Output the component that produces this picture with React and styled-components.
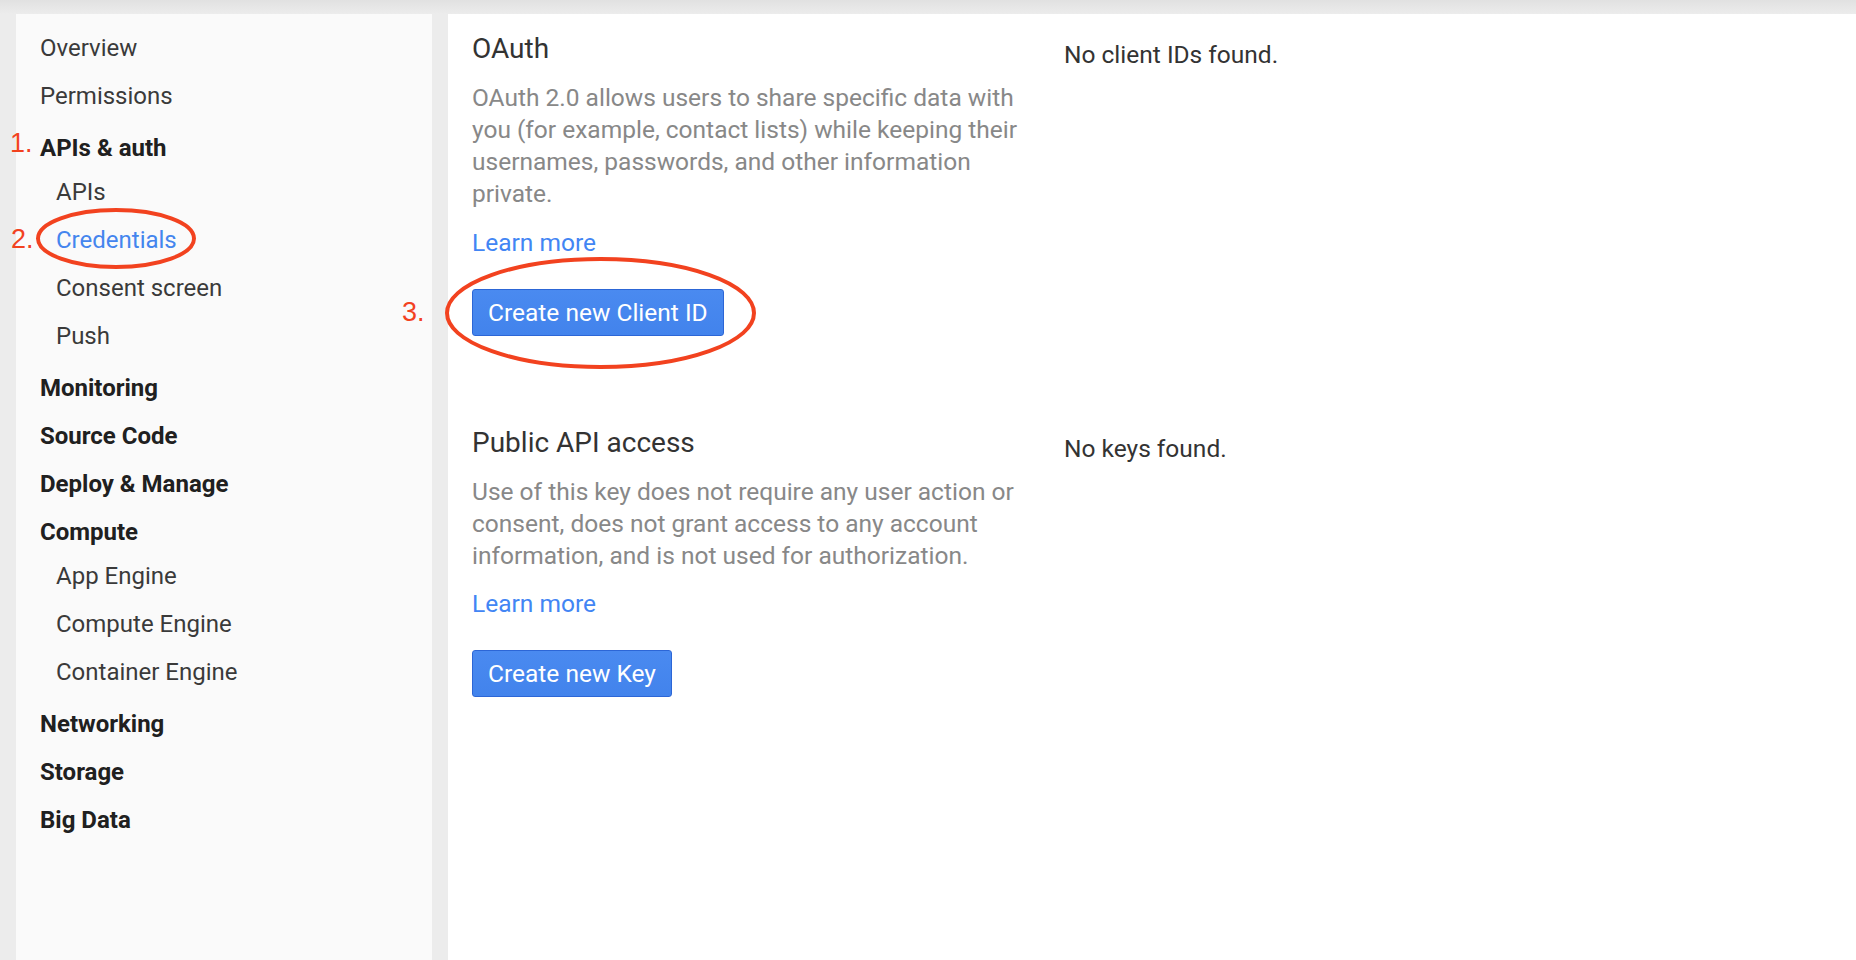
import React from "react";
import styled, { createGlobalStyle } from "styled-components";

const GlobalStyle = createGlobalStyle`
  html, body {
    margin: 0;
    padding: 0;
    background: #ececec;
  }
  body {
    font-family: Roboto, "Noto Sans", "Liberation Sans", sans-serif;
    -webkit-font-smoothing: antialiased;
  }
  * { box-sizing: border-box; }
`;

const Page = styled.div`
  position: relative;
  display: flex;
  gap: 16px;
  min-height: 100vh;
  padding: 14px 0 0 16px;
  background: linear-gradient(#e1e1e1 0px, #ececec 14px, #ececec 100%);
`;

const Sidebar = styled.nav`
  flex: 0 0 416px;
  background: #fafafa;
  padding: 10px 0 0 24px;
`;

const NavItem = styled.a`
  display: block;
  font-size: 24px;
  text-decoration: none;
  white-space: nowrap;
  cursor: pointer;
  height: 48px;
  line-height: ${(p) => (p.$heading ? "40px" : "48px")};
  padding-top: ${(p) => (p.$heading ? "8px" : "0")};
  padding-left: ${(p) => (p.$sub ? "16px" : "0")};
  font-weight: ${(p) => (p.$heading ? 700 : 400)};
  color: ${(p) => (p.$active ? "#4485ee" : p.$heading ? "#202020" : "#3a3a3a")};
`;

const Main = styled.main`
  flex: 1 1 auto;
  background: #ffffff;
  padding: 17px 24px 40px 24px;
`;

const Section = styled.section`
  display: grid;
  grid-template-columns: 560px 1fr;
  column-gap: 32px;
  margin-top: ${(p) => (p.$first ? "0" : "89px")};
`;

const Column = styled.div`
  display: flex;
  flex-direction: column;
  align-items: flex-start;
`;

const Title = styled.h2`
  margin: 0 0 15px 0;
  font-size: 28px;
  line-height: 36px;
  font-weight: 400;
  color: #333333;
`;

const Description = styled.p`
  margin: 0;
  font-size: 24.5px;
  line-height: 32px;
  color: #888888;
`;

const LearnMore = styled.a`
  margin-top: 16.5px;
  font-size: 24.5px;
  line-height: 32px;
  color: #4285f4;
  text-decoration: none;
  cursor: pointer;
`;

const PrimaryButton = styled.button`
  margin-top: 30px;
  height: 47px;
  padding: 0 15px;
  border: 1px solid #2c66d6;
  border-radius: 3px;
  background: linear-gradient(#4a8af0, #4283ec);
  color: #ffffff;
  font-family: Roboto, "Noto Sans", sans-serif;
  font-size: 24.5px;
  line-height: 45px;
  white-space: nowrap;
  cursor: pointer;
`;

const EmptyNote = styled.div`
  padding-top: 8px;
  font-size: 24.5px;
  line-height: 32px;
  color: #333333;
`;

const StepLabel = styled.span`
  position: absolute;
  left: ${(p) => p.$x}px;
  top: ${(p) => p.$y}px;
  font-family: "Liberation Sans", Arial, sans-serif;
  font-size: 27px;
  line-height: 27px;
  color: #f2421f;
  pointer-events: none;
`;

const Ring = styled.svg`
  position: absolute;
  left: ${(p) => p.$x}px;
  top: ${(p) => p.$y}px;
  overflow: visible;
  pointer-events: none;
`;

function Highlight({ x, y, w, h }) {
  return (
    <Ring $x={x} $y={y} width={w} height={h} viewBox={`0 0 ${w} ${h}`}>
      <ellipse
        cx={w / 2}
        cy={h / 2}
        rx={w / 2 - 2}
        ry={h / 2 - 2}
        fill="none"
        stroke="#f2421f"
        strokeWidth="4"
      />
    </Ring>
  );
}

const nav = [
  { label: "Overview" },
  { label: "Permissions" },
  { label: "APIs & auth", heading: true },
  { label: "APIs", sub: true },
  { label: "Credentials", sub: true, active: true },
  { label: "Consent screen", sub: true },
  { label: "Push", sub: true },
  { label: "Monitoring", heading: true },
  { label: "Source Code", heading: true },
  { label: "Deploy & Manage", heading: true },
  { label: "Compute", heading: true },
  { label: "App Engine", sub: true },
  { label: "Compute Engine", sub: true },
  { label: "Container Engine", sub: true },
  { label: "Networking", heading: true },
  { label: "Storage", heading: true },
  { label: "Big Data", heading: true },
];

export default function App() {
  return (
    <>
      <GlobalStyle />
      <Page>
        <Sidebar>
          {nav.map((item) => (
            <NavItem
              key={item.label}
              $heading={item.heading}
              $sub={item.sub}
              $active={item.active}
            >
              {item.label}
            </NavItem>
          ))}
        </Sidebar>
        <Main>
          <Section $first>
            <Column>
              <Title>OAuth</Title>
              <Description>
                OAuth 2.0 allows users to share specific data with you (for
                example, contact lists) while keeping their usernames,
                passwords, and other information private.
              </Description>
              <LearnMore>Learn more</LearnMore>
              <PrimaryButton>Create new Client ID</PrimaryButton>
            </Column>
            <EmptyNote>No client IDs found.</EmptyNote>
          </Section>
          <Section>
            <Column>
              <Title>Public API access</Title>
              <Description>
                Use of this key does not require any user action or consent,
                does not grant access to any account information, and is not
                used for authorization.
              </Description>
              <LearnMore>Learn more</LearnMore>
              <PrimaryButton>Create new Key</PrimaryButton>
            </Column>
            <EmptyNote>No keys found.</EmptyNote>
          </Section>
        </Main>

        <StepLabel $x={10} $y={130}>1.</StepLabel>
        <StepLabel $x={11} $y={226}>2.</StepLabel>
        <StepLabel $x={402} $y={299}>3.</StepLabel>
        <Highlight x={36} y={208} w={160} h={61} />
        <Highlight x={445} y={257} w={311} h={112} />
      </Page>
    </>
  );
}
